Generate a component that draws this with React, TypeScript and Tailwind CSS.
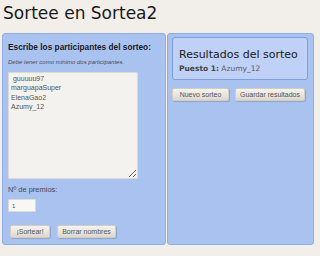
const sans = "font-['Liberation_Sans',Arial,sans-serif]"
const deja = "font-['DejaVu_Sans',sans-serif]"

function Boton({ label, width }: { label: string; width: string }) {
  return (
    <button
      className={`${sans} ${width} h-[13px] rounded-[2px] border border-[#d3ccc1] bg-gradient-to-b from-[#f6f4f0] to-[#ddd7ce] text-[7px] leading-[11px] text-[#5a5550] shadow-[1px_1px_1px_rgba(0,0,0,0.15)]`}
    >
      {label}
    </button>
  )
}

export default function App() {
  return (
    <div className="h-[256px] w-[320px] overflow-hidden bg-[#f2efea]">
      <h1
        className={`${deja} pl-[3px] pt-[3px] text-[17px] leading-[20px] text-[#1a1a1a]`}
      >
        Sortee en Sortea2
      </h1>

      <div className="mt-[10px] ml-[2px] flex h-[212px]">
        {/* participantes */}
        <div className="flex w-[164px] flex-col rounded-[3px] border border-[#90aeea] bg-[#a9c2f0] px-[5px] pt-[8px]">
          <p
            className={`${sans} text-[8.3px] font-bold leading-[10px] text-[#1c1c28]`}
          >
            Escribe los participantes del sorteo:
          </p>
          <p
            className={`${sans} mt-[6px] text-[6px] italic leading-[8px] text-[#4a4a55]`}
          >
            Debe tener como mínimo dos participantes.
          </p>
          <textarea
            className={`${sans} mt-[6px] h-[107px] w-[130px] rounded-[1px] border border-[#dcdad6] bg-[#f4f2ee] px-[2px] pt-[1px] text-[7px] leading-[9.3px] text-[#555] outline-none shadow-[inset_0_0_1px_rgba(0,0,0,0.1)]`}
            defaultValue={" guuuuu97\nmarguapaSuper\nElenaGao2\nAzumy_12"}
          />
          <p className={`${sans} mt-[6px] text-[7.5px] leading-[9px] text-[#4a4a50]`}>
            Nº de premios:
          </p>
          <input
            className={`${sans} mt-[5px] h-[13px] w-[28px] rounded-[1px] border border-[#dcdad6] bg-[#f8f7f4] px-[3px] text-[6px] text-[#555] outline-none`}
            defaultValue="1"
          />
          <div className="mt-[13px] ml-[2px] flex gap-[7px]">
            <Boton label="¡Sortear!" width="w-[40px]" />
            <Boton label="Borrar nombres" width="w-[59px]" />
          </div>
        </div>

        {/* resultados */}
        <div className="ml-px flex w-[147px] flex-col rounded-[3px] border border-[#90aeea] bg-[#a9c2f0] pl-[4px] pt-[3px]">
          <div className="h-[43px] w-[136px] rounded-[3px] border border-[#7e9fe6] bg-[#bfd1f6] pl-[6px] pt-[10px]">
            <p className={`${deja} text-[11px] leading-[13px] text-[#1a1a1a]`}>
              Resultados del sorteo
            </p>
            <p className={`${deja} mt-[3px] text-[7.5px] leading-[9px] text-[#5a5a66]`}>
              <span className="font-bold text-[#444]">Puesto 1:</span> Azumy_12
            </p>
          </div>
          <div className="mt-[8px] flex gap-[6px]">
            <Boton label="Nuevo sorteo" width="w-[57px]" />
            <Boton label="Guardar resultados" width="w-[70px]" />
          </div>
        </div>
      </div>
    </div>
  )
}
